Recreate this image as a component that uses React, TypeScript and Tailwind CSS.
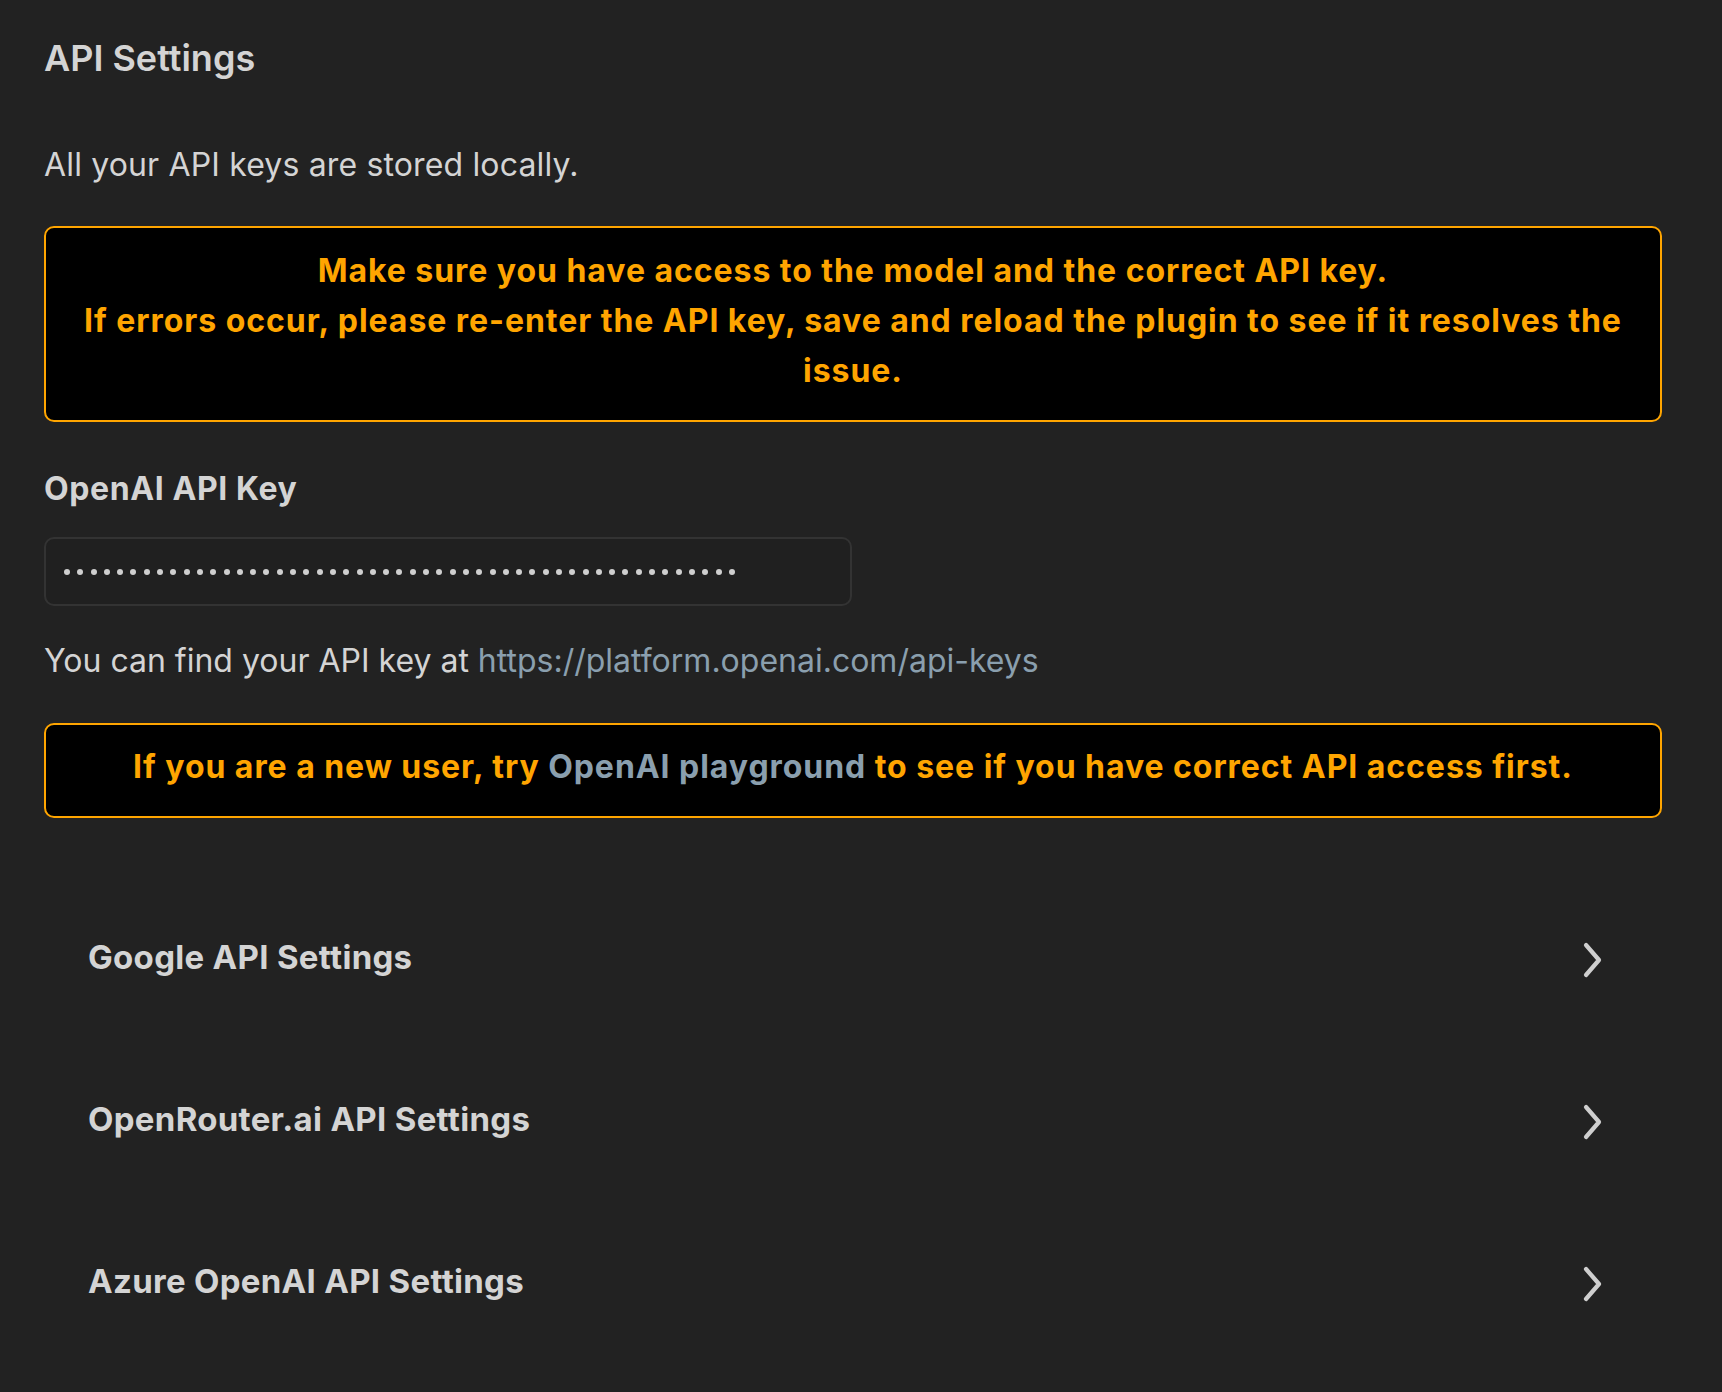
import React from "react";

function Chevron() {
  return (
    <svg width="24" height="36" viewBox="0 0 24 36" fill="none" className="shrink-0 mt-[6px]">
      <polyline points="5,3 18,18 5,33" stroke="#cfcfcf" strokeWidth="4.2" strokeLinecap="round" strokeLinejoin="round" />
    </svg>
  );
}

function Section({ title }: { title: string }) {
  return (
    <div className="h-[162px] flex items-center justify-between pl-[44px] pr-[57px]">
      <div className="text-[33px] leading-[44px] font-bold tracking-[0.3px] text-[#d4d4d4]">{title}</div>
      <Chevron />
    </div>
  );
}

export default function App() {
  const dots = Array.from({ length: 51 });
  return (
    <div className="min-h-screen w-full bg-[#222222] font-['Inter',sans-serif] text-[#dadada] pl-[44px] pr-[60px] pt-[35px]">
      <div className="text-[36px] leading-[46px] font-semibold text-[#d4d4d4]">API Settings</div>

      <div className="mt-[60px] text-[32px] leading-[48px] tracking-[0.15px] text-[#d4d4d4]">All your API keys are stored locally.</div>

      <div className="mt-[37px] border-2 border-[#ffa500] rounded-[10px] bg-black pt-[18px] pb-[24px] px-6 text-center text-[32px] leading-[50px] font-bold tracking-[0.95px] text-[#ffa500]">
        Make sure you have access to the model and the correct API key.
        <br />
        If errors occur, please re-enter the API key, save and reload the plugin to see if it resolves the issue.
      </div>

      <div className="mt-[47px] text-[32px] leading-[40px] font-bold tracking-[0.6px] text-[#d4d4d4]">OpenAI API Key</div>

      <div className="mt-[28px] w-[808px] h-[69px] border-2 border-[#333333] rounded-[10px] bg-[#202020] flex items-center gap-[7.3px] px-[18px]">
        {dots.map((_, i) => (
          <span key={i} className="w-[6px] h-[6px] rounded-full bg-[#cfcfcf] shrink-0" />
        ))}
      </div>

      <div className="mt-[31px] text-[32px] leading-[48px] text-[#d4d4d4]">
        You can find your API key at{" "}
        <a className="text-[#8a9fae]">https://platform.openai.com/api-keys</a>
      </div>

      <div className="mt-[38px] border-2 border-[#ffa500] rounded-[10px] bg-black pt-[17px] pb-[24px] px-6 text-center text-[32px] leading-[50px] font-bold tracking-[0.95px] text-[#ffa500]">
        If you are a new user, try <a className="text-[#8a9fae]">OpenAI playground</a> to see if you have correct API access first.
      </div>

      <div className="mt-[58px] flex flex-col">
        <Section title="Google API Settings" />
        <Section title="OpenRouter.ai API Settings" />
        <Section title="Azure OpenAI API Settings" />
      </div>
    </div>
  );
}
